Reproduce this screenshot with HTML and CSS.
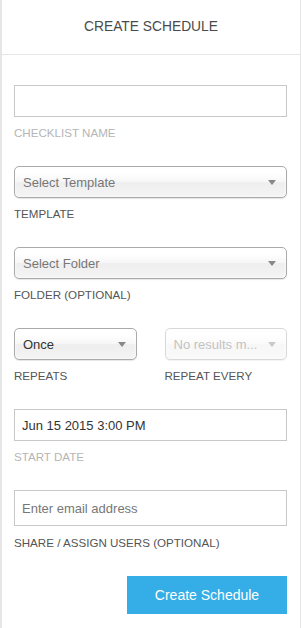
FILE: index.html
```html
<!DOCTYPE html>
<html>
  <head>
    <meta charset="UTF-8" />
    <title>Create Schedule</title>
    <link rel="stylesheet" href="styles.css">
  </head>
  <body>
    <div class="panel">
      <h1 class="panel-title">CREATE SCHEDULE</h1>
      <form class="schedule-form">
        <div class="field">
          <input type="text" class="text-input" id="checklist-name" />
          <label class="field-label muted" for="checklist-name">CHECKLIST NAME</label>
        </div>
        <div class="field">
          <div class="select">
            <span class="select-text">Select Template</span>
            <span class="select-arrow"></span>
          </div>
          <label class="field-label">TEMPLATE</label>
        </div>
        <div class="field">
          <div class="select">
            <span class="select-text">Select Folder</span>
            <span class="select-arrow"></span>
          </div>
          <label class="field-label">FOLDER (OPTIONAL)</label>
        </div>
        <div class="field field-row">
          <div class="half">
            <div class="select">
              <span class="select-text dark">Once</span>
              <span class="select-arrow"></span>
            </div>
            <label class="field-label">REPEATS</label>
          </div>
          <div class="half">
            <div class="select disabled">
              <span class="select-text">No results m...</span>
              <span class="select-arrow"></span>
            </div>
            <label class="field-label">REPEAT EVERY</label>
          </div>
        </div>
        <div class="field">
          <input type="text" class="text-input" id="start-date" value="Jun 15 2015 3:00 PM" />
          <label class="field-label muted" for="start-date">START DATE</label>
        </div>
        <div class="field">
          <input type="email" class="text-input tall" id="share" placeholder="Enter email address" />
          <label class="field-label" for="share">SHARE / ASSIGN USERS (OPTIONAL)</label>
        </div>
        <div class="actions">
          <button type="button" class="btn-primary">Create Schedule</button>
        </div>
      </form>
    </div>
  </body>
</html>
```

FILE: styles.css
```css
body {
  margin: 0;
  font-family: "Liberation Sans", Arial, sans-serif;
  background: #fff;
}
.panel {
  width: 301px;
  height: 628px;
  box-sizing: border-box;
  border-left: 2px solid #e6e6e6;
  border-right: 1px solid #e6e6e6;
}
.panel-title {
  margin: 0;
  height: 54px;
  line-height: 54px;
  text-align: center;
  font-size: 13.8px;
  font-weight: normal;
  color: #4a4a4a;
  border-bottom: 1px solid #e6e6e6;
}
.schedule-form {
  padding: 30px 13px 0 12px;
}
.field {
  margin-bottom: 25px;
}
.field-row {
  display: flex;
  gap: 28px;
}
.half {
  flex: 1;
}
.text-input {
  display: block;
  width: 100%;
  height: 32px;
  box-sizing: border-box;
  border: 1px solid #c8c8c8;
  border-radius: 0;
  padding: 0 7px;
  font-family: inherit;
  font-size: 13px;
  color: #333;
  outline: none;
}
.text-input.tall {
  height: 36px;
}
.text-input::placeholder {
  color: #777;
}
.field-label {
  display: block;
  margin-top: 8px;
  line-height: 16px;
  font-size: 11.6px;
  color: #555;
}
.text-input.tall + .field-label {
  margin-top: 9px;
}
.field-label.muted {
  color: #b5b5b5;
}
.select {
  display: flex;
  align-items: center;
  height: 32px;
  box-sizing: border-box;
  padding: 0 8px 0 8px;
  border: 1px solid #aaa;
  border-radius: 5px;
  background: linear-gradient(#fff 20%, #f6f6f6 50%, #eee 52%, #f4f4f4 100%);
  box-shadow: 0 0 3px #fff inset, 0 1px 1px rgba(0, 0, 0, 0.1);
}
.select-text {
  flex: 1;
  font-size: 13px;
  color: #777;
  white-space: nowrap;
  overflow: hidden;
}
.select-text.dark {
  color: #333;
}
.select-arrow {
  width: 0;
  height: 0;
  border-left: 4px solid transparent;
  border-right: 4px solid transparent;
  border-top: 5px solid #888;
  margin-right: 2px;
}
.select.disabled {
  opacity: 0.45;
}
.actions {
  display: flex;
  justify-content: flex-end;
}
.btn-primary {
  width: 160px;
  height: 38px;
  border: none;
  background: #35ade6;
  color: #fff;
  font-family: inherit;
  font-size: 14px;
}
```
